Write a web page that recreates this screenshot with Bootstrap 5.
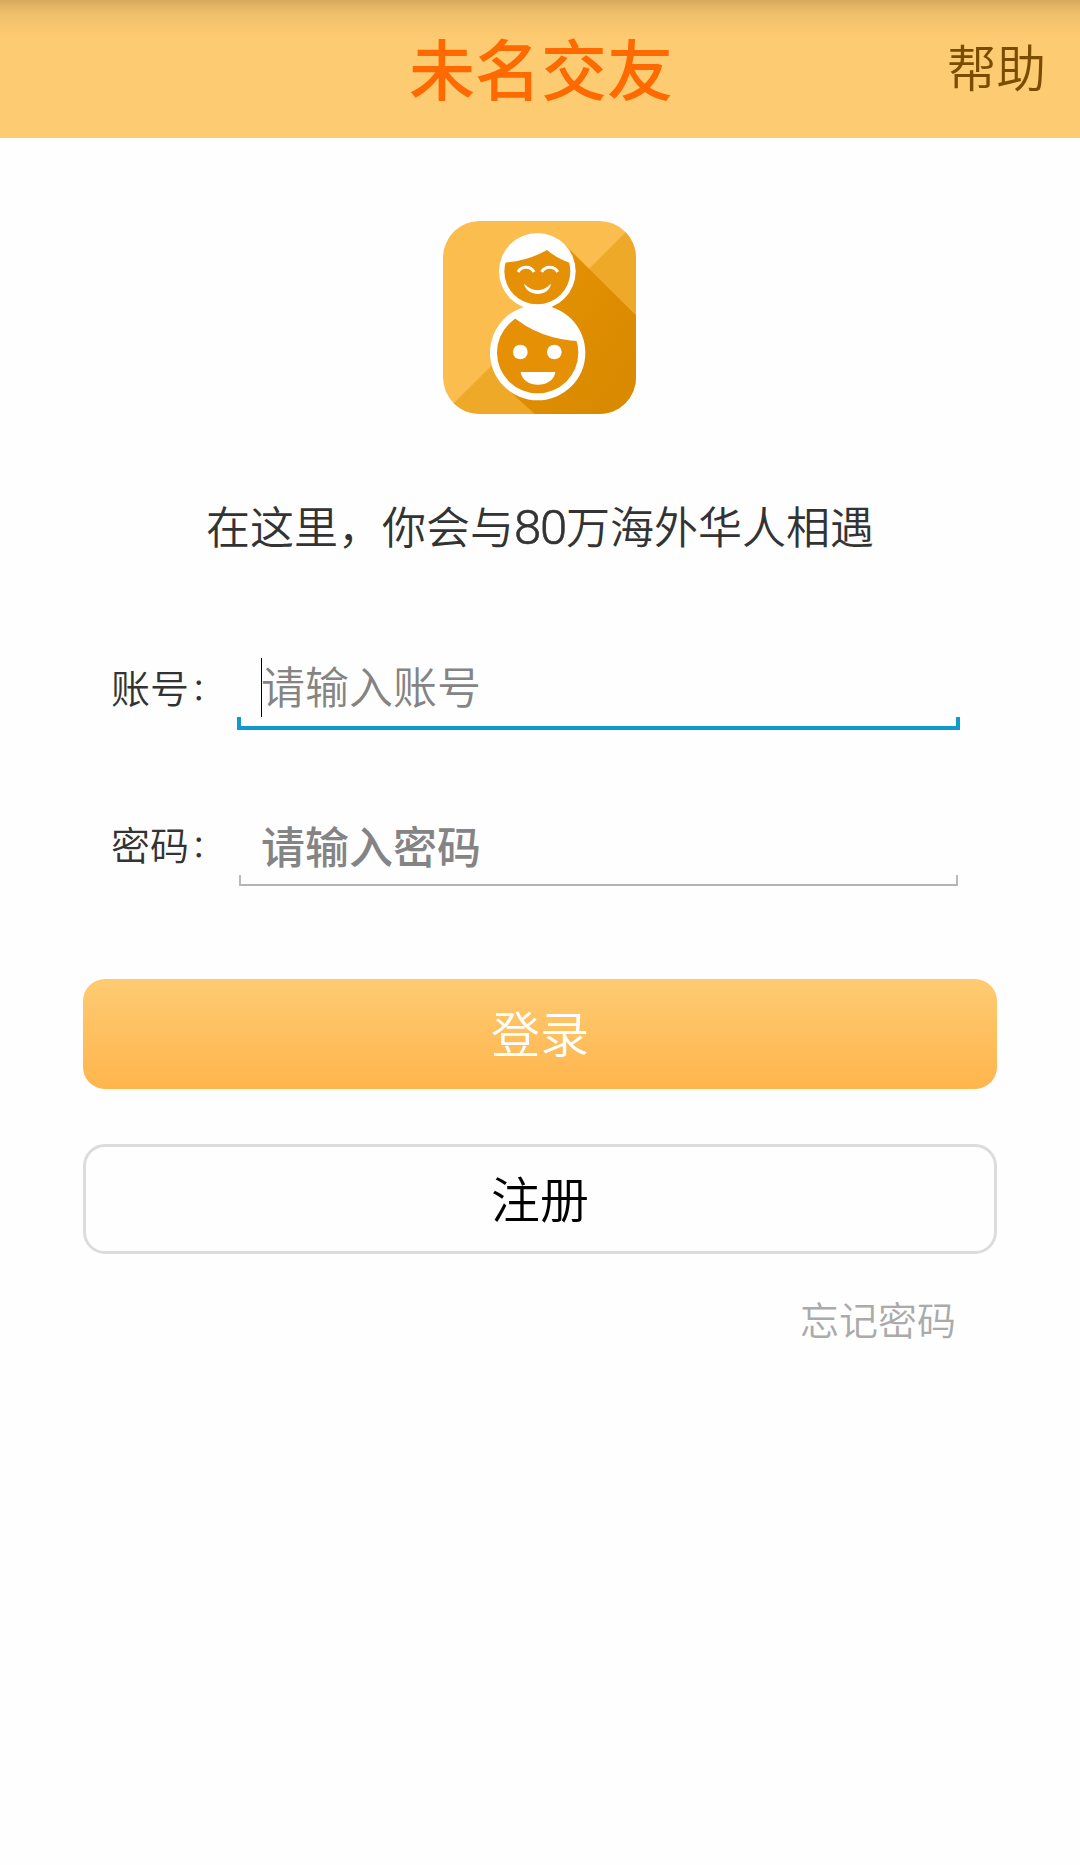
<!DOCTYPE html>
<html lang="zh-CN">
<head>
<meta charset="utf-8">
<meta name="viewport" content="width=device-width, initial-scale=1">
<title>未名交友</title>
<link href="https://cdn.jsdelivr.net/npm/bootstrap@5.3.0/dist/css/bootstrap.min.css" rel="stylesheet">
<style>
body{font-family:"Noto Sans CJK SC",sans-serif;font-weight:350;color:#333;background:#fefefe;min-height:1865px}
.topbar{height:138px;padding:0 34px 6px;background:linear-gradient(#d6aa5d 0,#d8ad60 3px,#dfb264 4px,#f0c06b 15px,#fcc96f 33px,#fdcb71 42px)}
.brand-title{font-size:66px;line-height:1;color:#ff6a00;font-weight:500;padding-left:2px}
.help-link{font-size:49.5px;line-height:1;color:#7a4c00}
.app-logo{width:193px;height:193px;margin:83px 1px 0 0}
.tagline{font-size:44px;line-height:60px;margin:81px 0 0}
.digits{font-family:Roboto,sans-serif;font-weight:300;font-size:49px;letter-spacing:-1.2px;line-height:1;-webkit-text-stroke:.6px #333}
.login-form{width:914px}
.field-row{padding-left:28px;height:78px}
.field-label{font-size:39px;line-height:1;width:126px;padding-bottom:10px}
.colon{font-size:31px;line-height:1;vertical-align:3px;padding-left:2px}
.field-box{width:723px;height:78px}
.field-input.form-control{font-size:44px;line-height:60px;height:66px;padding:0 0 0 24px;border:0;background:none;box-shadow:none;border-radius:0;font-weight:350}
.field-input::placeholder{color:#848484;opacity:1}
.field-input.form-control.heavy{font-weight:500;padding-top:5px}
.caret{left:24px;top:6px;width:1px;height:59px;background:#000}
.bracket{height:13px;left:0;right:0;bottom:0;border:4px solid #0f9acb;border-top:0}
.bracket-idle{height:11px;left:2px;right:2px;bottom:1px;border:solid #bbb;border-width:0 2px 2px;border-bottom-color:#b4b4b4}
.big-btn.btn{height:110px;border-radius:22px;font-size:49px;line-height:1;padding:0 0 6px;font-weight:350}
.btn-login.btn{border:0;color:#fff;background:linear-gradient(#fecb72,#ffb54d)}
.btn-register.btn{border:3px solid #dcdcdc;color:#000;background:#fefefe;margin-top:55px}
.forgot-link{font-size:39px;line-height:1;color:#aaa;margin:45px 41px 0 0}
.first-row{margin-top:97px}
.second-row{margin-top:79px}
.btn-login.btn{margin-top:92px}
</style>
</head>
<body>
<header class="topbar d-flex align-items-center">
  <div class="col"></div>
  <h1 class="brand-title m-0">未名交友</h1>
  <div class="col text-end"><a class="help-link text-decoration-none" href="#">帮助</a></div>
</header>
<main class="d-flex flex-column align-items-center">
  <svg class="app-logo" viewBox="39 33 579 579" aria-hidden="true">
    <defs>
      <clipPath id="tile"><rect x="39" y="33" width="579" height="579" rx="110"/></clipPath>
      <linearGradient id="shade" x1="0" y1="0" x2="1" y2="1"><stop offset=".3" stop-color="#e39003"/><stop offset=".85" stop-color="#d98a00"/></linearGradient>
      <clipPath id="topFace"><circle cx="322" cy="184" r="106"/></clipPath>
      <clipPath id="bigFace"><circle cx="323" cy="428" r="130"/></clipPath>
    </defs>
    <g clip-path="url(#tile)">
      <path fill="#fbbd4e" d="M39 33h579v579H39z"/>
      <path fill="#eea929" d="M618 36V612H39z"/>
      <path fill="url(#shade)" d="M404 104 618 316V612H314L222 528 322 300z"/>
    </g>
    <circle cx="322" cy="184" r="115" fill="#fff"/>
    <circle cx="323" cy="428" r="143" fill="#fff"/>
    <circle cx="322" cy="184" r="99" fill="#e69006"/>
    <circle cx="323" cy="428" r="122" fill="#e69006"/>
    <path clip-path="url(#topFace)" fill="#fff" d="M200 159Q285 158 351 120Q382 147 430 162V60H200z"/>
    <path clip-path="url(#bigFace)" fill="#fff" d="M240 313Q330 392 460 394V290H230z"/>
    <path fill="none" stroke="#fff" stroke-width="9" d="M264 186C274 167 303 167 312 186M335 186C345 167 374 167 383 186"/>
    <path fill="#fff" d="M282 221Q323 260 363 221C356 262 291 262 282 221z"/>
    <circle cx="271" cy="426" r="22" fill="#fff"/>
    <circle cx="373" cy="426" r="22" fill="#fff"/>
    <path fill="#fff" d="M272 486H376C370 537 278 537 272 486z"/>
  </svg>
  <p class="tagline text-nowrap">在这里，你会与<span class="digits">80</span>万海外华人相遇</p>
  <form class="login-form d-flex flex-column">
    <div class="field-row first-row d-flex align-items-center">
      <label class="field-label text-nowrap" for="account">账号<span class="colon">：</span></label>
      <div class="field-box position-relative">
        <input id="account" class="form-control field-input" type="text" placeholder="请输入账号">
        <span class="caret position-absolute"></span>
        <span class="bracket position-absolute"></span>
      </div>
    </div>
    <div class="field-row second-row d-flex align-items-center">
      <label class="field-label text-nowrap" for="secret">密码<span class="colon">：</span></label>
      <div class="field-box position-relative">
        <input id="secret" class="form-control field-input heavy" type="password" placeholder="请输入密码">
        <span class="bracket-idle position-absolute"></span>
      </div>
    </div>
    <button type="button" class="btn big-btn btn-login w-100">登录</button>
    <button type="button" class="btn big-btn btn-register w-100">注册</button>
    <a class="forgot-link align-self-end text-decoration-none" href="#">忘记密码</a>
  </form>
</main>
<script src="https://cdn.jsdelivr.net/npm/bootstrap@5.3.0/dist/js/bootstrap.bundle.min.js"></script>
</body>
</html>
